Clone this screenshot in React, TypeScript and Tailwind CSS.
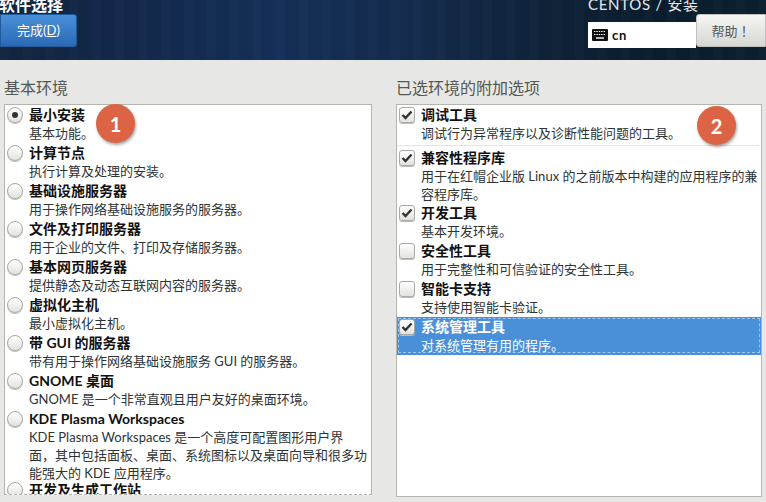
import React from "react";

const envs: [string, string[]][] = [
  ["最小安装", ["基本功能。"]],
  ["计算节点", ["执行计算及处理的安装。"]],
  ["基础设施服务器", ["用于操作网络基础设施服务的服务器。"]],
  ["文件及打印服务器", ["用于企业的文件、打印及存储服务器。"]],
  ["基本网页服务器", ["提供静态及动态互联网内容的服务器。"]],
  ["虚拟化主机", ["最小虚拟化主机。"]],
  ["带 GUI 的服务器", ["带有用于操作网络基础设施服务 GUI 的服务器。"]],
  ["GNOME 桌面", ["GNOME 是一个非常直观且用户友好的桌面环境。"]],
  ["KDE Plasma Workspaces", ["KDE Plasma Workspaces 是一个高度可配置图形用户界", "面，其中包括面板、桌面、系统图标以及桌面向导和很多功", "能强大的 KDE 应用程序。"]],
  ["开发及生成工作站", []],
];

function Radio({ on }: { on?: boolean }) {
  return (
    <span className="w-[16px] h-[16px] shrink-0 rounded-full border border-[#a9a9a5] bg-gradient-to-b from-white to-[#e2e2de] shadow-[0_1px_0_#bdbdb9] flex items-center justify-center">
      {on && <span className="w-[6px] h-[6px] rounded-full bg-[#2e3436]" />}
    </span>
  );
}

function Check({ on }: { on?: boolean }) {
  return (
    <span className="w-[16px] h-[16px] shrink-0 rounded-[3px] border border-[#a9a9a5] bg-gradient-to-b from-white to-[#e2e2de] shadow-[0_1px_0_#bdbdb9] flex items-center justify-center">
      {on && (
        <svg width="12" height="10" viewBox="0 0 12 10">
          <path d="M1.5 5 L4.5 8 L10.5 1.5" fill="none" stroke="#2e3436" strokeWidth="2.4" />
        </svg>
      )}
    </span>
  );
}

function Badge({ n, cls }: { n: string; cls: string }) {
  return (
    <div className={"absolute w-[39px] h-[39px] rounded-full bg-[#dc6444] text-white font-bold text-[20px] flex items-center justify-center shadow-[1px_2px_3px_rgba(0,0,0,0.35)] " + cls}>
      {n}
    </div>
  );
}

function Addon({ on, name, lines, rowClass }: { on?: boolean; name: string; lines: string[]; rowClass: string }) {
  return (
    <div className={"flex gap-[6px] pl-[2px] " + rowClass}>
      <Check on={on} />
      <div>
        <div className="-mt-[1px] font-bold text-[14px] text-[#111]">{name}</div>
        {lines.map((l) => (
          <div key={l} className="whitespace-nowrap">{l}</div>
        ))}
      </div>
    </div>
  );
}

export default function App() {
  return (
    <div className="relative w-[766px] h-[502px] overflow-hidden bg-[#e7e7e5] text-[13px] leading-[18px] text-[#2e3436] font-['Lato','Noto_Sans_CJK_SC',sans-serif]">
      <header className="h-[60px] overflow-hidden flex justify-between bg-[repeating-linear-gradient(90deg,rgba(255,255,255,0.012)_0px,rgba(255,255,255,0.012)_9px,rgba(0,0,0,0.025)_9px,rgba(0,0,0,0.025)_23px),linear-gradient(90deg,#12253f_0%,#13284a_15%,#14305a_36%,#132b4c_55%,#0f2238_72%,#0a1e2e_85%,#0c2030_100%)]">
        <div className="flex flex-col w-[77px]">
          <div className="h-[14px] overflow-hidden">
            <div className="-mt-[5px] -ml-[1px] text-[16px] leading-[20px] font-bold text-white whitespace-nowrap">软件选择</div>
          </div>
          <button className="w-[77px] h-[33px] rounded-r-[3px] border border-[#1f5a9a] bg-gradient-to-b from-[#4a90d9] to-[#2a6ab5] text-white text-[13px] pb-[1px]">
            完成(<span className="underline">D</span>)
          </button>
        </div>
        <div className="w-[178px] flex flex-col">
          <div className="h-[14px] overflow-hidden">
            <div className="-mt-[5px] text-[15px] leading-[18px] text-[#e4e8ee] tracking-[0.7px] whitespace-nowrap">CENTOS / 安装</div>
          </div>
          <div className="flex items-start">
            <div className="mt-[8px] w-[108px] h-[26px] bg-white flex items-center pl-[4px] gap-[4px]">
              <svg width="16" height="12" viewBox="0 0 16 12">
                <rect width="16" height="12" rx="1" fill="#111" />
                <path d="M2 2.5h12M2 5.5h12" stroke="#fff" strokeWidth="1.2" strokeDasharray="1.4 1" />
                <path d="M4 9h8" stroke="#fff" strokeWidth="1.4" />
              </svg>
              <span className="font-bold text-[13px] tracking-[0.8px] text-[#111]">cn</span>
            </div>
            <button className="w-[70px] h-[33px] rounded-l-[3px] border border-[#c0c0bc] bg-gradient-to-b from-[#f6f6f4] to-[#d6d6d2] text-[#555] text-[13px] font-['Noto_Sans_CJK_JP',sans-serif]">
              帮助！
            </button>
          </div>
        </div>
      </header>

      <main className="flex pl-[4px] pr-[4px] pt-[19px] gap-[24px]">
        <section className="w-[368px]">
          <h2 className="text-[16px] leading-[18px] text-[#555753] mb-[7px]">基本环境</h2>
          <div className="h-[391px] border border-[#b4b4b0] [border-bottom-style:dashed] bg-white overflow-hidden pt-[2px]">
            {envs.map(([name, lines], i) => (
              <div key={name} className="flex gap-[6px] pl-[2px] min-h-[38px]">
                <Radio on={i === 0} />
                <div>
                  <div className="-mt-[1px] font-bold text-[14px] text-[#111] whitespace-nowrap">{name}</div>
                  {lines.map((l) => (
                    <div key={l} className="whitespace-nowrap">{l}</div>
                  ))}
                </div>
              </div>
            ))}
          </div>
        </section>
        <section className="w-[366px]">
          <h2 className="text-[16px] leading-[18px] text-[#555753] mb-[7px]">已选环境的附加选项</h2>
          <div className="h-[393px] border border-[#b4b4b0] bg-white overflow-hidden pt-[2px]">
            <Addon on name="调试工具" lines={["调试行为异常程序以及诊断性能问题的工具。"]} rowClass="h-[39px] border-b border-[#e4e4e2] mb-[4px] mr-[2px]" />
            <Addon on name="兼容性程序库" lines={["用于在红帽企业版 Linux 的之前版本中构建的应用程序的兼", "容程序库。"]} rowClass="h-[55px]" />
            <Addon on name="开发工具" lines={["基本开发环境。"]} rowClass="h-[38px]" />
            <Addon name="安全性工具" lines={["用于完整性和可信验证的安全性工具。"]} rowClass="h-[38px]" />
            <Addon name="智能卡支持" lines={["支持使用智能卡验证。"]} rowClass="h-[36px]" />
            <div className="bg-[#4a90d9] text-white p-[2px] h-[38px]">
              <div className="flex gap-[6px] outline-1 outline-dashed outline-[#9cc4ec] h-[33px]">
                <Check on />
                <div className="-mt-[1px]">
                  <div className="font-bold text-[14px]">系统管理工具</div>
                  <div>对系统管理有用的程序。</div>
                </div>
              </div>
            </div>
          </div>
        </section>
      </main>
      <Badge n="1" cls="left-[96px] top-[104px]" />
      <Badge n="2" cls="left-[697px] top-[106px]" />
    </div>
  );
}
